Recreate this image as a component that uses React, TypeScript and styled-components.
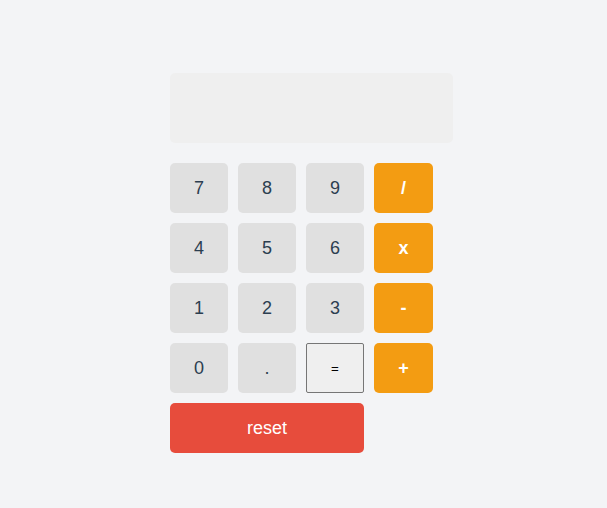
import React from "react";
import styled, { createGlobalStyle } from "styled-components";

const Global = createGlobalStyle`
  html, body { margin: 0; padding: 0; background: #f3f4f6; }
  body { font-family: "Liberation Sans", Arial, sans-serif; }
`;

const Page = styled.div`
  width: 607px;
  height: 508px;
  padding: 73px 0 0 170px;
  box-sizing: border-box;
`;

const Calc = styled.div`
  width: 283px;
  display: flex;
  flex-direction: column;
  gap: 20px;
`;

const Display = styled.div`
  height: 70px;
  background: #efefef;
  border-radius: 5px;
`;

const Keys = styled.div`
  display: grid;
  grid-template-columns: 58px 58px 58px 59px;
  grid-auto-rows: 50px;
  gap: 10px;
`;

const Key = styled.button<{ $variant?: "num" | "op" | "reset" | "eq"; $span?: number }>`
  border: none;
  border-radius: 5px;
  font-family: "Liberation Sans", Arial, sans-serif;
  font-size: 18px;
  padding: 0;
  cursor: pointer;
  grid-column: span ${(p) => p.$span ?? 1};
  background: ${(p) =>
    p.$variant === "op" ? "#f39c12" : p.$variant === "reset" ? "#e74c3c" : p.$variant === "eq" ? "#efefef" : "#e0e0e0"};
  color: ${(p) => (p.$variant === "op" || p.$variant === "reset" ? "#ffffff" : p.$variant === "eq" ? "#000" : "#2c3e50")};
  font-weight: ${(p) => (p.$variant === "op" ? 700 : 400)};
  ${(p) =>
    p.$variant === "eq" &&
    `
    border: 1px solid #767676;
    border-radius: 2px;
    font-size: 13.33px;
  `}
`;

const rows: [string, "num" | "op" | "eq"][] = [
  ["7", "num"], ["8", "num"], ["9", "num"], ["/", "op"],
  ["4", "num"], ["5", "num"], ["6", "num"], ["x", "op"],
  ["1", "num"], ["2", "num"], ["3", "num"], ["-", "op"],
  ["0", "num"], [".", "num"], ["=", "eq"], ["+", "op"],
];

export default function App() {
  return (
    <>
      <Global />
      <Page>
        <Calc>
          <Display />
          <Keys>
            {rows.map(([label, v], i) => (
              <Key key={i} $variant={v}>{label}</Key>
            ))}
            <Key $variant="reset" $span={3}>reset</Key>
          </Keys>
        </Calc>
      </Page>
    </>
  );
}
